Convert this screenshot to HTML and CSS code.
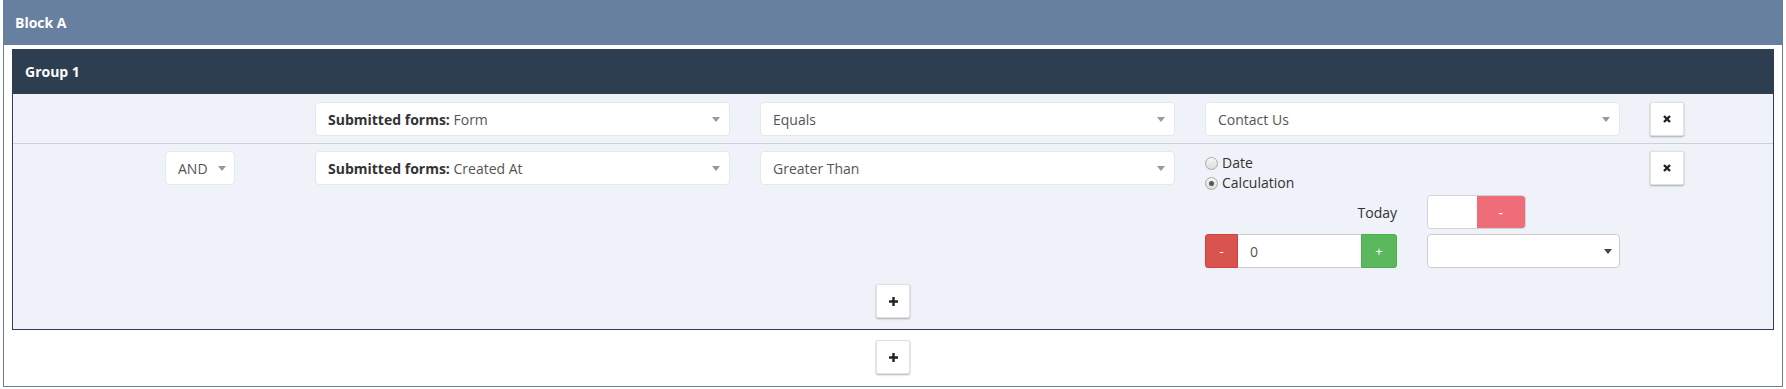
FILE: index.html
```html
<!DOCTYPE html>
<html>
<head>
<meta charset="utf-8">
<link rel="stylesheet" href="styles.css">
</head>
<body>
<div class="block">
  <div class="block-header">Block A</div>
  <div class="block-body">
    <div class="group">
      <div class="group-header">Group 1</div>
      <div class="group-body">
        <div class="rule rule-first">
          <div class="cell"></div>
          <div class="cell"></div>
          <div class="cell"><div class="sel"><span><b>Submitted forms:</b> Form</span><i class="caret"></i></div></div>
          <div class="cell"><div class="sel"><span>Equals</span><i class="caret"></i></div></div>
          <div class="cell"><div class="sel"><span>Contact Us</span><i class="caret"></i></div></div>
          <div class="cell"><button class="btn-icon"><svg width="10" height="10" viewBox="0 0 10 10"><path d="M2 2L8 8M8 2L2 8" stroke="#222" stroke-width="2.4" stroke-linecap="butt"/></svg></button></div>
        </div>
        <div class="rule">
          <div class="cell"></div>
          <div class="cell"><div class="sel sel-and"><span>AND</span><i class="caret"></i></div></div>
          <div class="cell"><div class="sel"><span><b>Submitted forms:</b> Created At</span><i class="caret"></i></div></div>
          <div class="cell"><div class="sel"><span>Greater Than</span><i class="caret"></i></div></div>
          <div class="cell">
            <div class="radios">
              <label class="radio"><span class="radio-dot"></span>Date</label>
              <label class="radio"><span class="radio-dot checked"></span>Calculation</label>
            </div>
            <div class="calc-row calc-today">
              <div class="today-label">Today</div>
              <div class="toggle"><span class="toggle-off"></span><span class="toggle-on">-</span></div>
            </div>
            <div class="calc-row calc-num">
              <div class="num-group">
                <span class="num-btn num-minus">-</span>
                <span class="num-input">0</span>
                <span class="num-btn num-plus">+</span>
              </div>
              <div class="sel sel-native"><span></span><i class="caret caret-dark"></i></div>
            </div>
          </div>
          <div class="cell"><button class="btn-icon"><svg width="10" height="10" viewBox="0 0 10 10"><path d="M2 2L8 8M8 2L2 8" stroke="#222" stroke-width="2.4" stroke-linecap="butt"/></svg></button></div>
        </div>
        <div class="group-footer">
          <button class="btn-icon"><svg width="11" height="11" viewBox="0 0 11 11"><path d="M5.5 1V10M1 5.5H10" stroke="#222" stroke-width="2.4"/></svg></button>
        </div>
      </div>
    </div>
    <div class="block-footer">
      <button class="btn-icon"><svg width="11" height="11" viewBox="0 0 11 11"><path d="M5.5 1V10M1 5.5H10" stroke="#222" stroke-width="2.4"/></svg></button>
    </div>
  </div>
</div>
</body>
</html>
```

FILE: styles.css
```css
* { box-sizing: border-box; }
html, body { margin: 0; padding: 0; background: #fff; }
body {
  font-family: "Open Sans", "Liberation Sans", sans-serif;
  font-size: 14px;
  color: #555;
}
.block {
  margin: 0 3px;
  width: 1780px;
  border: 1px solid #6b7f99;
  border-top: 0;
  background: #fff;
}
.block-header {
  height: 45px;
  background: #68809f;
  color: #fff;
  font-weight: 700;
  font-size: 14px;
  line-height: 45px;
  padding-left: 12px;
  margin: 0 -1px;
}
.block-body {
  padding: 4px 8px 12px 8px;
}
.group {
  border: 1px solid #2c3e50;
}
.group-header {
  height: 44px;
  background: #2c3e50;
  color: #fff;
  font-weight: 700;
  font-size: 14px;
  line-height: 44px;
  padding-left: 12px;
}
.group-body {
  background: #eff2f9;
}
.rule {
  display: grid;
  grid-template-columns: 137px 150px 445px 445px 445px 1fr;
  align-items: start;
  padding: 7px 0 7px 0;
}
.rule-first {
  padding-top: 8px;
  border-bottom: 1px solid #cdd1d7;
}
.cell { padding: 0 15px; }
.sel {
  height: 34px;
  background: #fff;
  border: 1px solid #e4e7ec;
  border-radius: 4px;
  display: flex;
  align-items: center;
  justify-content: space-between;
  padding: 0 9px 0 12px;
  color: #555;
  white-space: nowrap;
}
.sel b { color: #333; font-weight: 700; }
.sel-and { width: 70px; padding-right: 8px; }
.caret {
  display: block;
  width: 0; height: 0;
  border-left: 4px solid transparent;
  border-right: 4px solid transparent;
  border-top: 5px solid #999;
}
.caret-dark { border-top-color: #444; margin-right: -2px; }
.btn-icon {
  width: 34px;
  height: 34px;
  background: #fff;
  border: 1px solid #dfe1e4;
  border-radius: 2px;
  box-shadow: 0 1px 2px rgba(0,0,0,0.3);
  display: flex;
  align-items: center;
  justify-content: center;
  padding: 0;
  margin: 0;
  cursor: pointer;
}
.radios { padding-top: 2px; }
.radio {
  display: flex;
  align-items: center;
  height: 20px;
  line-height: 20px;
  color: #333;
}
.radio-dot {
  width: 13px;
  height: 13px;
  border-radius: 50%;
  border: 1px solid #aaa;
  background: linear-gradient(#f6f6f6, #dcdcdc);
  margin-right: 4px;
  position: relative;
}
.radio-dot.checked::after {
  content: "";
  position: absolute;
  left: 3px; top: 3px;
  width: 5px; height: 5px;
  border-radius: 50%;
  background: #555;
}
.calc-row {
  display: grid;
  grid-template-columns: 192px 193px;
  column-gap: 30px;
  align-items: center;
}
.calc-today { margin-top: 2px; }
.calc-num { margin-top: 5px; }
.today-label { text-align: right; color: #333; }
.toggle {
  display: flex;
  width: 99px;
  height: 34px;
  border: 1px solid #cfd2d6;
  border-radius: 4px;
  overflow: hidden;
}
.toggle-off { flex: 1; background: #fff; }
.toggle-on {
  flex: 1;
  background: #ef6d78;
  color: #fff;
  display: flex;
  align-items: center;
  justify-content: center;
  font-size: 14px;
}
.num-group {
  display: flex;
  height: 34px;
}
.num-btn {
  display: flex;
  align-items: center;
  justify-content: center;
  color: #fff;
  font-size: 13px;
}
.num-minus {
  width: 33px;
  background: #d9534f;
  border: 1px solid #d43f3a;
  border-radius: 3px 0 0 3px;
}
.num-plus {
  width: 36px;
  background: #5cb85c;
  border: 1px solid #4cae4c;
  border-radius: 0 3px 3px 0;
}
.num-input {
  flex: 1;
  background: #fff;
  border-top: 1px solid #ccc;
  border-bottom: 1px solid #ccc;
  padding-left: 12px;
  display: flex;
  align-items: center;
  color: #555;
}
.sel-native { border-color: #ccc; }
.group-footer {
  display: flex;
  justify-content: center;
  padding: 9px 0 11px 0;
}
.block-footer {
  display: flex;
  justify-content: center;
  padding-top: 10px;
}
```
